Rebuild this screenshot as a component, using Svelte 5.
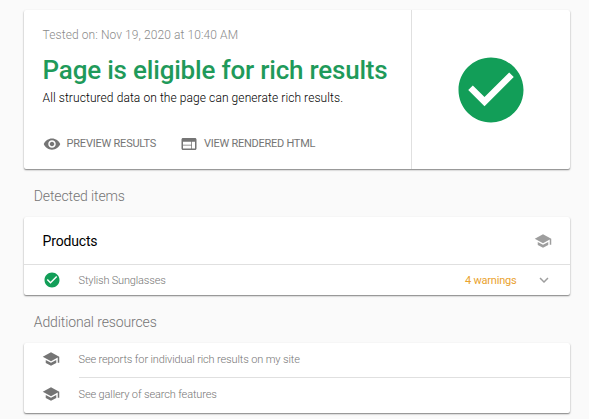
<script>
  const cap = 'M5 13.18v4L12 21l7-3.82v-4L12 17l-7-3.82zM12 3L1 9l11 6 9-4.91V17h2V9L12 3z';
  const check = 'M12 2C6.48 2 2 6.48 2 12s4.48 10 10 10 10-4.48 10-10S17.52 2 12 2zm-2 15l-5-5 1.41-1.41L10 14.17l7.59-7.59L19 8l-9 9z';
  const eye = 'M12 4.5C7 4.5 2.73 7.61 1 12c1.73 4.39 6 7.5 11 7.5s9.27-3.11 11-7.5c-1.73-4.39-6-7.5-11-7.5zM12 17c-2.76 0-5-2.24-5-5s2.24-5 5-5 5 2.24 5 5-2.24 5-5 5zm0-8c-1.66 0-3 1.34-3 3s1.34 3 3 3 3-1.34 3-3-1.34-3-3-3z';
  const web = 'M20 4H4c-1.1 0-1.99.9-1.99 2L2 18c0 1.1.9 2 2 2h16c1.1 0 2-.9 2-2V6c0-1.1-.9-2-2-2zm-5 14H4v-4h11v4zm0-5H4V9h11v4zm5 5h-4V9h4v9z';
  const chevron = 'M7.41 8.59L12 13.17l4.59-4.58L18 10l-6 6-6-6 1.41-1.41z';
  const resources = ['See reports for individual rich results on my site', 'See gallery of search features'];
</script>

{#snippet icon(d, size = 18)}
  <svg width={size} height={size} viewBox="0 0 24 24" fill="currentColor" aria-hidden="true"><path {d} /></svg>
{/snippet}

<main>
  <section class="card result">
    <div class="summary">
      <div class="tested">Tested on: Nov 19, 2020 at 10:40 AM</div>
      <h1>Page is eligible for rich results</h1>
      <p>All structured data on the page can generate rich results.</p>
      <div class="actions">
        <div class="action preview">{@render icon(eye)}<span>PREVIEW RESULTS</span></div>
        <div class="action html">{@render icon(web)}<span>VIEW RENDERED HTML</span></div>
      </div>
    </div>
    <div class="status green">{@render icon(check, 78)}</div>
  </section>

  <h2>Detected items</h2>
  <section class="card">
    <div class="products">
      <h3>Products</h3>
      <span class="faint">{@render icon(cap)}</span>
    </div>
    <div class="item">
      <span class="green lead">{@render icon(check)}</span>
      <span class="name">Stylish Sunglasses</span>
      <span class="warn">4 warnings</span>
      <span class="faint">{@render icon(chevron)}</span>
    </div>
  </section>

  <h2>Additional resources</h2>
  <section class="card">
    {#each resources as text, i}
      <div class="resource">
        <span class="lead">{@render icon(cap)}</span>
        <span class="link" class:line={i === 0}>{text}</span>
      </div>
    {/each}
  </section>
</main>

<style>
  :global(body) { background: #fafafa; }
  main {
    box-sizing: border-box;
    height: 419px;
    padding: 10px 19px 0 24px;
    overflow: hidden;
    font-family: Roboto, "Liberation Sans", sans-serif;
    color: #757575;
    white-space: nowrap;
  }
  svg { display: block; flex: none; }
  h1, h2, h3, p { margin: 0; }
  .card {
    background: #fff;
    border-radius: 2px;
    box-shadow: 0 1px 2px rgba(0, 0, 0, .34), 0 1px 1px rgba(0, 0, 0, .2);
  }
  .result { display: flex; height: 159px; }
  .summary {
    box-sizing: border-box;
    width: 388px;
    padding: 17px 0 0 18.6px;
    border-right: 1px solid #e0e0e0;
  }
  .tested { font-size: 12px; line-height: 16px; font-weight: 300; letter-spacing: .09px; color: #8a8a8a; }
  h1 { margin-top: 9px; font-size: 26px; line-height: 36px; font-weight: 500; letter-spacing: -.2px; color: #1f9a5a; }
  p { font-size: 12px; line-height: 16px; font-weight: 300; letter-spacing: .085px; color: #000; margin-top: 2px; }
  .actions { display: flex; margin-top: 29px; }
  .action { display: flex; align-items: center; gap: 6px; font-size: 11px; line-height: 18px; letter-spacing: -.22px; }
  .html { letter-spacing: -.26px; }
  .preview { width: 137.4px; }
  .status { flex: 1; display: flex; align-items: center; justify-content: center; }
  .green { color: #129e58; }
  h2 { height: 48px; padding-left: 9.8px; font-size: 14px; line-height: 54px; font-weight: 300; letter-spacing: -.12px; box-sizing: border-box; }
  .products {
    display: flex;
    align-items: center;
    justify-content: space-between;
    height: 47px;
    padding: 0 18px 0 18.6px;
    border-bottom: 1px solid #e0e0e0;
  }
  h3 { font-size: 14px; font-weight: 400; letter-spacing: -.17px; color: #000; }
  .faint { color: #9e9e9e; }
  .item { display: flex; align-items: center; height: 30px; padding: 0 17.5px 0 18.6px; font-size: 11px; }
  .lead { width: 36px; }
  .name { flex: 1; font-weight: 300; letter-spacing: -.17px; }
  .warn { margin-right: 18px; letter-spacing: -.2px; color: #eaa22e; }
  .resource { display: flex; align-items: flex-start; height: 35px; padding-left: 18.5px; font-size: 11px; letter-spacing: -.13px; }
  .resource .lead { padding-top: 7px; margin-left: -.5px; width: 36.5px; }
  .link { flex: 1; line-height: 34px; font-weight: 300; border-bottom: 1px solid transparent; }
  .line { border-color: #e0e0e0; }
</style>
